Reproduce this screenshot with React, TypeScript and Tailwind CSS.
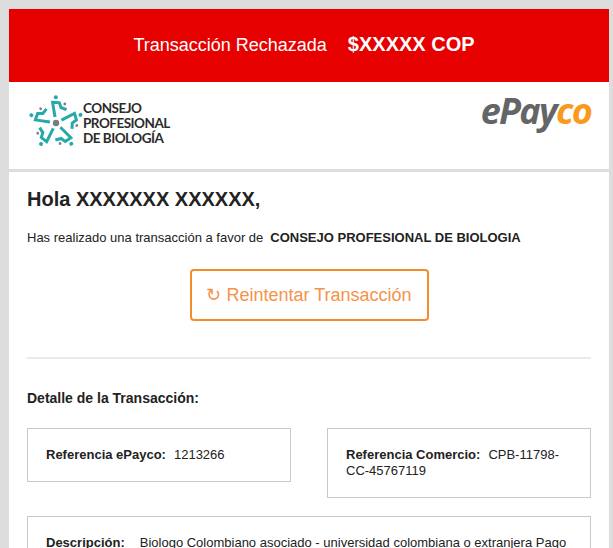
const ARMS = [0, 72, 144, 216, 288];

function BiologyMark() {
  return (
    <svg width="56" height="54" viewBox="-28 -28 56 54" className="shrink-0">
      {ARMS.map((angle) => (
        <g key={angle} transform={`rotate(${angle})`}>
          <polyline
            points="-1,-6 -3.4,-20.6 3.3,-20.4 5,-15.5 10.5,-13.4"
            fill="none"
            stroke="#27a9a9"
            strokeWidth="3"
            strokeLinejoin="miter"
          />
          <circle cx="-0.2" cy="-25.8" r="2" fill="#27a9a9" />
          <circle cx="8.8" cy="-19" r="1.4" fill="#7a7f82" />
        </g>
      ))}
      <circle cx="0" cy="0" r="3.2" fill="#777c7f" />
    </svg>
  );
}

export default function App() {
  return (
    <div className="h-[548px] overflow-hidden bg-[#dddddd] pt-[9px] pl-[9px] font-['Liberation_Sans',Arial,sans-serif] text-[#222222]">
      <div className="w-[600px]">
        <div className="flex h-[73px] items-center justify-center gap-[21px] bg-[#e70000] pr-[10px] text-white">
          <span className="text-[18px]">Transacción Rechazada</span>
          <span className="mb-[4px] text-[20px] font-bold">$XXXXX COP</span>
        </div>

        <div className="flex h-[87px] items-start justify-between bg-white pr-[18px]">
          <div className="mt-[13px] ml-[19px] flex items-center">
            <BiologyMark />
            <div className="mt-[2px] -ml-[1px] font-['Lato',sans-serif] text-[13.5px] leading-[15px] font-bold tracking-[-0.5px] text-[#2b2b2b]">
              <p>CONSEJO</p>
              <p>PROFESIONAL</p>
              <p>DE BIOLOGÍA</p>
            </div>
          </div>
          <div className="mt-[6px] font-['Open_Sans',sans-serif] text-[36px] leading-[46px] font-bold tracking-[-1.7px] italic">
            <span className="text-[#636566]">ePay</span>
            <span className="text-[#f99a1c]">co</span>
          </div>
        </div>

        <div className="mt-[3px] h-[400px] bg-white px-[18px] pt-[14px]">
          <h1 className="text-[20px] leading-[26px] font-bold">Hola XXXXXXX XXXXXX,</h1>
          <p className="mt-[18px] text-[13px] leading-[16px]">
            Has realizado una transacción a favor de
            <span className="ml-[7px] font-bold">CONSEJO PROFESIONAL DE BIOLOGIA</span>
          </p>

          <div className="mt-[23px] flex justify-center">
            <button className="flex h-[52px] w-[239px] items-center justify-center rounded-[4px] border-2 border-[#f18e2a] text-[18px] text-[#f4934a]">
              ↻ Reintentar Transacción
            </button>
          </div>

          <div className="mt-[36px] h-[2px] bg-[#eaeaea]" />

          <h2 className="mt-[30px] text-[14px] leading-[18px] font-bold">Detalle de la Transacción:</h2>

          <div className="mt-[21px] flex items-start justify-between">
            <div className="h-[54px] w-[264px] border border-[#c9c9c9] px-[18px] pt-[18px] text-[13px] leading-[16px]">
              <span className="font-bold">Referencia ePayco:</span>
              <span className="ml-[8px]">1213266</span>
            </div>
            <div className="h-[70px] w-[264px] border border-[#c9c9c9] px-[18px] pt-[18px] text-[13px] leading-[16px]">
              <span className="font-bold">Referencia Comercio:</span>
              <span className="ml-[8px]">CPB-11798-CC-45767119</span>
            </div>
          </div>

          <div className="mt-[18px] h-[80px] border border-[#c9c9c9] px-[18px] pt-[18px] text-[13px] leading-[16px]">
            <span className="font-bold">Descripción:</span>
            <span className="ml-[15px]">Biologo Colombiano asociado - universidad colombiana o extranjera Pago</span>
          </div>
        </div>
      </div>
    </div>
  );
}
